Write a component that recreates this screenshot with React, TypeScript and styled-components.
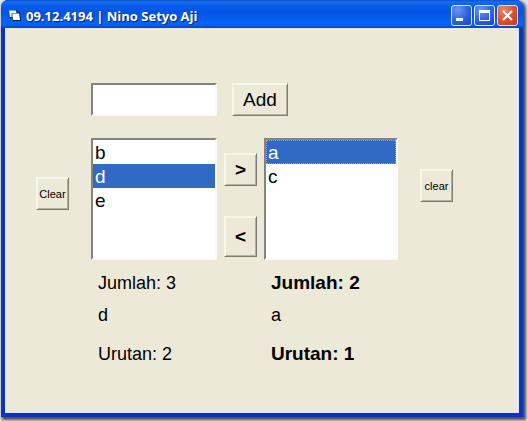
import React, { useState } from "react";
import styled, { createGlobalStyle, css } from "styled-components";

const Global = createGlobalStyle`
  * { box-sizing: border-box; }
  body { margin: 0; background: #fff; font-family: "Liberation Sans", Arial, sans-serif; color: #000; }
`;

const Desktop = styled.div`
  min-height: 100vh;
  display: flex;
  padding: 0 5px 4px 1px;
  background: #dfe3ee;
`;

const Window = styled.main`
  flex: 1;
  display: flex;
  flex-direction: column;
  border: solid #0a34bd;
  border-width: 0 4px 4px;
  border-radius: 7px 7px 0 0;
  background: #0a34bd;
  box-shadow: 2px 2px 3px 1px #4a4a50;
`;

const TitleBar = styled.header`
  height: 28px;
  margin: 0 -4px;
  padding: 0 5px 0 7px;
  display: flex;
  align-items: center;
  gap: 4px;
  border-radius: 7px 7px 0 0;
  background: linear-gradient(#0a4fd0 0, #1c6cf0 2px, #0660ee 5px, #0553e2 12px, #0560f2 20px, #0564f8 25px, #0640c4 28px);
`;

const Title = styled.h1`
  flex: 1;
  margin: 0;
  padding-top: 3px;
  font: bold 13px/16px "Open Sans", "Liberation Sans", sans-serif;
  color: #fff;
  text-shadow: 1px 1px 1px #08246b;
  white-space: nowrap;
`;

const Controls = styled.div`
  display: flex;
  gap: 2px;
  padding-top: 3px;
`;

const WindowButton = styled.button<{ $close?: boolean }>`
  width: 21px;
  height: 21px;
  padding: 0;
  display: grid;
  place-items: center;
  border: 1px solid #dfe8fb;
  border-radius: 3px;
  background: ${(p) =>
    p.$close
      ? "radial-gradient(circle at 30% 20%, #e88a6c, #dc4f2b 55%, #c03c14)"
      : "radial-gradient(circle at 30% 20%, #6d94ee, #2c62e2 55%, #1545bf)"};
`;

const Form = styled.section`
  flex: 1;
  display: grid;
  grid-template-columns: 48px 126px 33px 134px 48px;
  grid-template-rows: 33px 122px auto;
  column-gap: 7px;
  row-gap: 22px;
  align-content: start;
  padding: 55px 16px 16px 31px;
  border: solid #d9e8fb;
  border-width: 0 1px 1px 0;
  background: #ece9d8;
`;

const Entry = styled.div`
  grid-column: 2 / -1;
  display: flex;
  gap: 15px;
`;

const sunken = css`
  border: 2px solid;
  border-color: #85837a #fbfaf4 #fbfaf4 #85837a;
  border-radius: 0;
  background: #fff;
`;

const TextBox = styled.input`
  ${sunken}
  width: 126px;
  height: 33px;
  padding: 0 4px;
  font: 20px/24px "Liberation Sans", Arial, sans-serif;
`;

const PushButton = styled.button<{ $size: "small" | "large" | "arrow"; $width?: number; $height?: number }>`
  width: ${(p) => p.$width ?? 33}px;
  height: ${(p) => p.$height ?? 33}px;
  padding: 0;
  border: 1px solid;
  border-color: #f8f6ea #7d7a6e #7d7a6e #f8f6ea;
  border-radius: 0;
  background: #ece9d8;
  box-shadow: inset 1px 1px 0 #f8f6ea, inset -1px -1px 0 #b5b1a2;
  color: #000;
  text-align: center;
  white-space: nowrap;
  font-family: "Liberation Sans", Arial, sans-serif;
  font-size: ${(p) => (p.$size === "small" ? 11 : 19)}px;
  font-weight: ${(p) => (p.$size === "arrow" ? 700 : 400)};
`;

const SideSlot = styled.div<{ $top: number; $end?: boolean }>`
  display: flex;
  align-items: flex-start;
  justify-content: ${(p) => (p.$end ? "flex-end" : "flex-start")};
  padding-top: ${(p) => p.$top}px;
`;

const Transfer = styled.div`
  display: flex;
  flex-direction: column;
  gap: 30px;
  padding-top: 15px;
`;

const List = styled.ul`
  ${sunken}
  margin: 0;
  padding: 0;
  list-style: none;
`;

const Item = styled.li<{ $selected: boolean; $focused: boolean }>`
  height: 24px;
  padding: 1px 0 0 2px;
  font-size: 19px;
  line-height: 24px;
  cursor: default;
  ${(p) => p.$selected && css`background: #316ac5; color: #fff;`}
  ${(p) => p.$focused && css`outline: 1px dotted #b9a36f; outline-offset: -1px;`}
`;

const Summary = styled.div<{ $column: number; $bold?: boolean }>`
  grid-column: ${(p) => p.$column} / span 2;
  padding-left: 7px;
  margin-top: -10px;
  font-size: ${(p) => (p.$bold ? 19 : 18)}px;
  line-height: 22px;
  font-weight: ${(p) => (p.$bold ? 700 : 400)};
`;

const Line = styled.p<{ $after: number }>`
  margin: 0 0 ${(p) => p.$after}px;
`;

const Plain = styled.span`
  font-size: 18px;
  font-weight: 400;
`;

const AppIcon = () => (
  <svg width="14" height="14" viewBox="0 0 14 14" aria-hidden="true">
    <path d="M1 3h8l1 2h2l1 9H5L4 11H2z" fill="#17223c" />
    <path d="M1 3h7l1 7H2z" fill="#fff" />
    <path d="M4 6h7l1 7H5z" fill="#fff" />
    <path d="M1 3h7v1H1zM4 6h7v1H4z" fill="#49b5b8" />
    <path d="M4 6v5l1 2" fill="none" stroke="#3d4658" />
  </svg>
);

function ListPane({ label, items, selected, focused, onSelect }: {
  label: string; items: string[]; selected: string; focused?: boolean; onSelect: (s: string) => void;
}) {
  return (
    <List role="listbox" aria-label={label} tabIndex={0}>
      {items.map((item) => (
        <Item
          key={item}
          role="option"
          aria-selected={item === selected}
          $selected={item === selected}
          $focused={!!focused && item === selected}
          onClick={() => onSelect(item)}
        >
          {item}
        </Item>
      ))}
    </List>
  );
}

export default function App() {
  const [text, setText] = useState("");
  const [left, setLeft] = useState(["b", "d", "e"]);
  const [right, setRight] = useState(["a", "c"]);
  const [leftSel, setLeftSel] = useState("d");
  const [rightSel, setRightSel] = useState("a");

  const add = () => {
    if (text && !left.includes(text)) setLeft([...left, text]);
    setText("");
  };
  const moveRight = () => {
    if (!left.includes(leftSel)) return;
    setLeft(left.filter((i) => i !== leftSel));
    setRight([...right, leftSel]);
  };
  const moveLeft = () => {
    if (!right.includes(rightSel)) return;
    setRight(right.filter((i) => i !== rightSel));
    setLeft([...left, rightSel]);
  };

  return (
    <Desktop>
      <Global />
      <Window>
        <TitleBar>
          <AppIcon />
          <Title>09.12.4194 | Nino Setyo Aji</Title>
          <Controls>
            <WindowButton aria-label="Minimize">
              <svg width="19" height="19"><path d="M4 12h7v3H4z" fill="#fff" /></svg>
            </WindowButton>
            <WindowButton aria-label="Maximize">
              <svg width="19" height="19"><path d="M4 4h11v11H4zM5 7v7h9V7z" fill="#fff" fillRule="evenodd" /></svg>
            </WindowButton>
            <WindowButton aria-label="Close" $close>
              <svg width="19" height="19"><path d="M5 5l9 9M14 5l-9 9" stroke="#fff" strokeWidth="2" /></svg>
            </WindowButton>
          </Controls>
        </TitleBar>
        <Form>
          <Entry>
            <TextBox aria-label="Item" value={text} onChange={(e) => setText(e.target.value)} />
            <PushButton $size="large" $width={56} onClick={add}>Add</PushButton>
          </Entry>
          <SideSlot $top={39}>
            <PushButton $size="small" onClick={() => setLeft([])}>Clear</PushButton>
          </SideSlot>
          <ListPane label="Left items" items={left} selected={leftSel} onSelect={setLeftSel} />
          <Transfer>
            <PushButton $size="arrow" aria-label="Move right" onClick={moveRight}>&gt;</PushButton>
            <PushButton $size="arrow" $height={41} aria-label="Move left" onClick={moveLeft}>&lt;</PushButton>
          </Transfer>
          <ListPane label="Right items" items={right} selected={rightSel} focused onSelect={setRightSel} />
          <SideSlot $top={31} $end>
            <PushButton $size="small" onClick={() => setRight([])}>clear</PushButton>
          </SideSlot>
          <Summary $column={2}>
            <Line $after={10}>Jumlah: {left.length}</Line>
            <Line $after={17}>{leftSel}</Line>
            <Line $after={0}>Urutan: {left.indexOf(leftSel) + 1}</Line>
          </Summary>
          <Summary $column={4} $bold>
            <Line $after={10}>Jumlah: {right.length}</Line>
            <Line $after={17}><Plain>{rightSel}</Plain></Line>
            <Line $after={0}>Urutan: {right.indexOf(rightSel) + 1}</Line>
          </Summary>
        </Form>
      </Window>
    </Desktop>
  );
}
